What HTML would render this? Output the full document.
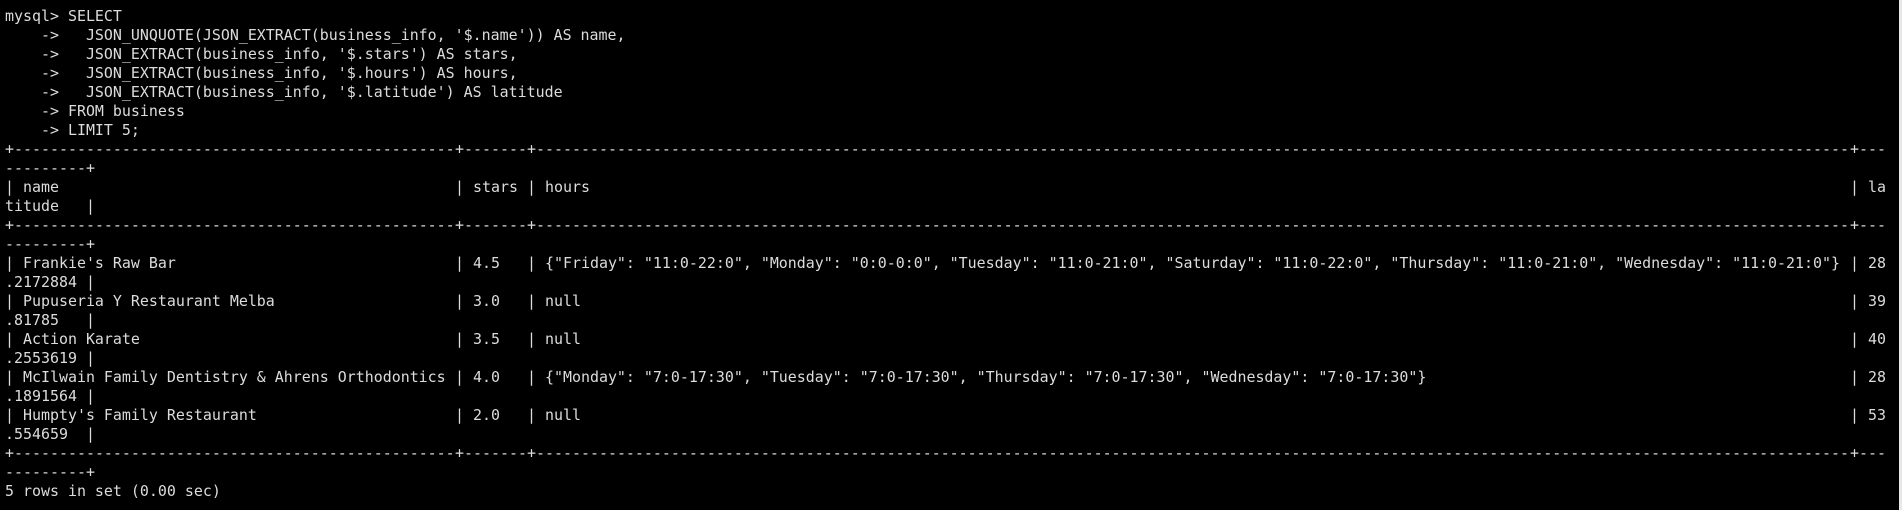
<!DOCTYPE html>
<html><head><meta charset="utf-8"><style>
html,body{margin:0;padding:0;background:#000;}
body{width:1902px;height:510px;overflow:hidden;position:relative;}
#sb{position:absolute;right:0;top:0;width:3px;height:510px;background:#e8e8e8;}
.l{position:absolute;left:5px;height:19px;width:1890px;}
.l span{position:absolute;top:0;white-space:pre;overflow:hidden;display:block;height:19px;}
.t{font-family:"DejaVu Sans Mono","Liberation Mono",monospace;font-size:14.95px;line-height:19px;color:#dcdcdc;}
</style></head><body class="t">
<div id="sb"></div>

<div class="l" style="top:7px"><span style="left:0">mysql&gt; SELECT</span></div>
<div class="l" style="top:26px"><span style="left:0">    -&gt;   JSON_UNQUOTE(JSON_EXTRACT(business_info, '$.name')) AS name,</span></div>
<div class="l" style="top:45px"><span style="left:0">    -&gt;   JSON_EXTRACT(business_info, '$.stars') AS stars,</span></div>
<div class="l" style="top:64px"><span style="left:0">    -&gt;   JSON_EXTRACT(business_info, '$.hours') AS hours,</span></div>
<div class="l" style="top:83px"><span style="left:0">    -&gt;   JSON_EXTRACT(business_info, '$.latitude') AS latitude</span></div>
<div class="l" style="top:102px"><span style="left:0">    -&gt; FROM business</span></div>
<div class="l" style="top:121px"><span style="left:0">    -&gt; LIMIT 5;</span></div>

<!-- border -->
<div class="l" style="top:140px">
<span style="left:0">+</span>
<span style="left:9px;width:441px">------------------------------------------------------------</span>
<span style="left:450px">+</span>
<span style="left:459px;width:63px">----------</span>
<span style="left:522px">+</span>
<span style="left:531px;width:1314px">------------------------------------------------------------------------------------------------------------------------------------------------------------------------</span>
<span style="left:1845px">+</span>
<span style="left:1854px;width:27px">---</span>
</div>
<div class="l" style="top:159px"><span style="left:0">---------+</span></div>

<div class="l" style="top:178px">
<span style="left:0">| name</span><span style="left:450px">| stars</span><span style="left:522px">| hours</span><span style="left:1845px">| la</span>
</div>
<div class="l" style="top:197px"><span style="left:0">titude   |</span></div>

<div class="l" style="top:216px">
<span style="left:0">+</span>
<span style="left:9px;width:441px">------------------------------------------------------------</span>
<span style="left:450px">+</span>
<span style="left:459px;width:63px">----------</span>
<span style="left:522px">+</span>
<span style="left:531px;width:1314px">------------------------------------------------------------------------------------------------------------------------------------------------------------------------</span>
<span style="left:1845px">+</span>
<span style="left:1854px;width:27px">---</span>
</div>
<div class="l" style="top:235px"><span style="left:0">---------+</span></div>

<div class="l" style="top:254px">
<span style="left:0">| Frankie's Raw Bar</span><span style="left:450px">| 4.5</span><span style="left:522px">| {"Friday": "11:0-22:0", "Monday": "0:0-0:0", "Tuesday": "11:0-21:0", "Saturday": "11:0-22:0", "Thursday": "11:0-21:0", "Wednesday": "11:0-21:0"}</span><span style="left:1845px">| 28</span>
</div>
<div class="l" style="top:273px"><span style="left:0">.2172884 |</span></div>

<div class="l" style="top:292px">
<span style="left:0">| Pupuseria Y Restaurant Melba</span><span style="left:450px">| 3.0</span><span style="left:522px">| null</span><span style="left:1845px">| 39</span>
</div>
<div class="l" style="top:311px"><span style="left:0">.81785   |</span></div>

<div class="l" style="top:330px">
<span style="left:0">| Action Karate</span><span style="left:450px">| 3.5</span><span style="left:522px">| null</span><span style="left:1845px">| 40</span>
</div>
<div class="l" style="top:349px"><span style="left:0">.2553619 |</span></div>

<div class="l" style="top:368px">
<span style="left:0">| McIlwain Family Dentistry &amp; Ahrens Orthodontics</span><span style="left:450px">| 4.0</span><span style="left:522px">| {"Monday": "7:0-17:30", "Tuesday": "7:0-17:30", "Thursday": "7:0-17:30", "Wednesday": "7:0-17:30"}</span><span style="left:1845px">| 28</span>
</div>
<div class="l" style="top:387px"><span style="left:0">.1891564 |</span></div>

<div class="l" style="top:406px">
<span style="left:0">| Humpty's Family Restaurant</span><span style="left:450px">| 2.0</span><span style="left:522px">| null</span><span style="left:1845px">| 53</span>
</div>
<div class="l" style="top:425px"><span style="left:0">.554659  |</span></div>

<div class="l" style="top:444px">
<span style="left:0">+</span>
<span style="left:9px;width:441px">------------------------------------------------------------</span>
<span style="left:450px">+</span>
<span style="left:459px;width:63px">----------</span>
<span style="left:522px">+</span>
<span style="left:531px;width:1314px">------------------------------------------------------------------------------------------------------------------------------------------------------------------------</span>
<span style="left:1845px">+</span>
<span style="left:1854px;width:27px">---</span>
</div>
<div class="l" style="top:463px"><span style="left:0">---------+</span></div>

<div class="l" style="top:482px"><span style="left:0">5 rows in set (0.00 sec)</span></div>
</body></html>
